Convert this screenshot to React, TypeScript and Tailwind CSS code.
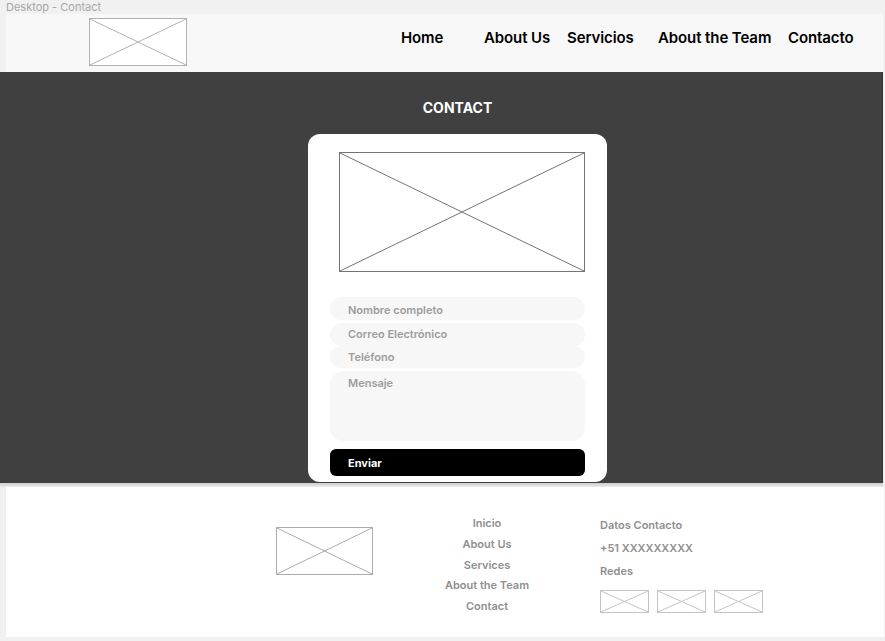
// Desktop - Contact wireframe page

function Placeholder({ className, stroke }: { className: string; stroke: string }) {
  return (
    <div className={`relative ${className}`} style={{ borderColor: stroke }}>
      <svg className="absolute inset-0 w-full h-full" viewBox="0 0 100 100" preserveAspectRatio="none">
        <line x1="0" y1="0" x2="100" y2="100" stroke={stroke} strokeWidth="1" vectorEffect="non-scaling-stroke" />
        <line x1="100" y1="0" x2="0" y2="100" stroke={stroke} strokeWidth="1" vectorEffect="non-scaling-stroke" />
      </svg>
    </div>
  );
}

const navItems = [
  { label: 'Home', w: 'w-[83px]' },
  { label: 'About Us', w: 'w-[83px]' },
  { label: 'Servicios', w: 'w-[91px]' },
  { label: 'About the Team', w: 'w-[130px]' },
  { label: 'Contacto', w: 'w-[80px]' },
];

const footerLinks = ['Inicio', 'About Us', 'Services', 'About the Team', 'Contact'];

export default function App() {
  return (
    <div className="w-[885px] h-[641px] bg-[#f1f1f1] overflow-hidden font-['Inter',sans-serif]">
      {/* Frame label */}
      <div className="h-[14px] pl-[6px] text-[11px] leading-[14px] text-[#a6a6a6]">Desktop - Contact</div>

      {/* Header */}
      <header className="ml-[6px] w-[877px] h-[58px] bg-[#f8f8f8] flex items-start">
        <Placeholder className="ml-[83px] mt-[4px] w-[98px] h-[48px] border bg-white" stroke="#b0b2b7" />
        <nav className="ml-[214px] mt-[14px] flex">
          {navItems.map((item) => (
            <a key={item.label} className={`${item.w} text-[15px] leading-[20px] font-semibold tracking-[-0.1px] text-black whitespace-nowrap`}>
              {item.label}
            </a>
          ))}
        </nav>
      </header>

      {/* Dark contact section */}
      <section className="w-[883px] h-[411px] bg-[#404040] border-r border-[#333333]">
        <div className="ml-[308px] w-[299px] flex flex-col">
          <h1 className="pt-[27px] h-[44px] text-center text-[14px] leading-[17px] font-bold text-white">CONTACT</h1>
          <div className="mt-[18px] h-[348px] bg-white rounded-[12px] pt-[18px] px-[22px] flex flex-col">
            <Placeholder className="ml-[9px] w-[246px] h-[120px] border bg-white" stroke="#70747b" />
            <div className="mt-[25px] h-[23px] rounded-full bg-[#f7f7f7] pl-[18px] pt-[3px] flex items-center text-[11px] font-semibold text-[#9d9d9d]">
              Nombre completo
            </div>
            <div className="mt-[3px] h-[23px] rounded-full bg-[#f7f7f7] pl-[18px] flex items-center text-[11px] font-semibold text-[#9d9d9d]">
              Correo Electrónico
            </div>
            <div className="h-[22px] rounded-full bg-[#f7f7f7] pl-[18px] pt-[1px] flex items-center text-[11px] font-semibold text-[#9d9d9d]">
              Teléfono
            </div>
            <div className="mt-[3px] h-[70px] rounded-[14px] bg-[#f7f7f7] pl-[18px] pt-[5px] text-[11px] leading-[14px] font-semibold text-[#9d9d9d]">
              Mensaje
            </div>
            <button className="mt-[8px] h-[27px] rounded-[6px] bg-black pl-[18px] pt-[1px] text-left text-[11px] font-bold text-white">
              Enviar
            </button>
          </div>
        </div>
      </section>
      <div className="w-[883px] h-[4px] bg-gradient-to-b from-[#cdcdcd] to-[#ececec]" />

      {/* Footer */}
      <footer className="ml-[6px] w-[878px] h-[150px] bg-white flex items-start">
        <Placeholder className="ml-[270px] mt-[40px] w-[97px] h-[48px] border bg-white" stroke="#ababb3" />
        <ul className="ml-[54px] mt-[26px] w-[120px] flex flex-col items-center">
          {footerLinks.map((l) => (
            <li key={l} className="text-[11px] leading-[20.75px] font-semibold text-[#8f8f8f] whitespace-nowrap">
              {l}
            </li>
          ))}
        </ul>
        <div className="ml-[53px] mt-[27px] flex flex-col text-[11px] leading-[23px] font-semibold text-[#8f8f8f]">
          <span>Datos Contacto</span>
          <span>+51 XXXXXXXXX</span>
          <span>Redes</span>
          <div className="mt-[7px] flex gap-[8px]">
            <Placeholder className="w-[49px] h-[23px] border bg-white" stroke="#c4c4c8" />
            <Placeholder className="w-[49px] h-[23px] border bg-white" stroke="#c4c4c8" />
            <Placeholder className="w-[49px] h-[23px] border bg-white" stroke="#c4c4c8" />
          </div>
        </div>
      </footer>
    </div>
  );
}
